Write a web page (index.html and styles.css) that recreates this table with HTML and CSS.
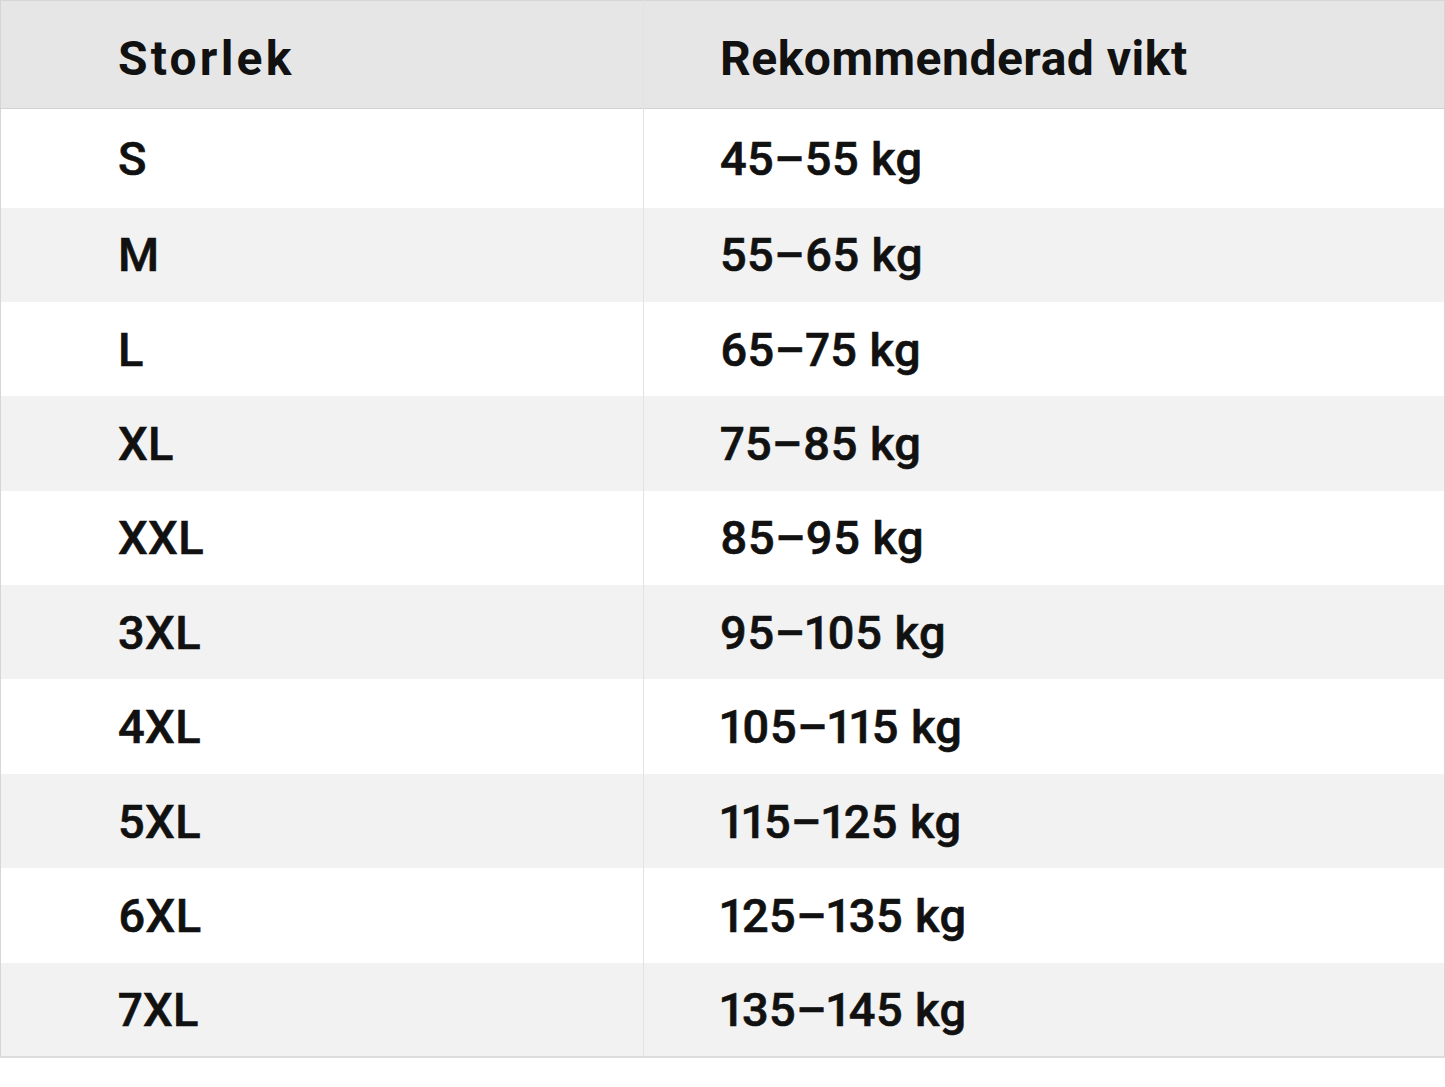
FILE: index.html
```html
<!DOCTYPE html>
<html lang="sv">
<head>
<meta charset="utf-8">
<title>Storlekstabell</title>
<link rel="stylesheet" href="styles.css">
</head>
<body>
<table class="size-table">
  <thead>
    <tr class="head-row">
      <th class="col-size">Storlek</th>
      <th class="col-weight">Rekommenderad vikt</th>
    </tr>
  </thead>
  <tbody>
    <tr class="first"><td class="col-size">S</td><td class="col-weight">45–55 kg</td></tr>
    <tr><td class="col-size">M</td><td class="col-weight">55–65 kg</td></tr>
    <tr><td class="col-size">L</td><td class="col-weight">65–75 kg</td></tr>
    <tr><td class="col-size">XL</td><td class="col-weight">75–85 kg</td></tr>
    <tr><td class="col-size">XXL</td><td class="col-weight">85–95 kg</td></tr>
    <tr><td class="col-size">3XL</td><td class="col-weight">95–105 kg</td></tr>
    <tr><td class="col-size">4XL</td><td class="col-weight">105–115 kg</td></tr>
    <tr><td class="col-size">5XL</td><td class="col-weight">115–125 kg</td></tr>
    <tr><td class="col-size">6XL</td><td class="col-weight">125–135 kg</td></tr>
    <tr><td class="col-size">7XL</td><td class="col-weight">135–145 kg</td></tr>
  </tbody>
</table>
</body>
</html>
```
FILE: styles.css
```css
html, body {
  margin: 0;
  padding: 0;
  background: #ffffff;
}
body {
  font-family: Roboto, "Liberation Sans", sans-serif;
  color: #111111;
}
.size-table {
  width: 1445px;
  border-collapse: collapse;
  border: 1px solid #d6d6d6;
  border-bottom: 2px solid #dcdcdc;
}
.size-table th,
.size-table td {
  text-align: left;
  padding: 0;
  vertical-align: middle;
}
.head-row {
  background: #e6e6e6;
  height: 108px;
  border-bottom: 1px solid #d2d2d2;
}
.head-row th {
  font-size: 48px;
  font-weight: 700;
  padding-top: 8px;
  letter-spacing: 0.5px;
}
.head-row th.col-size {
  letter-spacing: 3.2px;
}
tbody tr {
  height: 94.4px;
}
tbody tr.first {
  height: 99px;
}
tbody tr:nth-child(even) {
  background: #f2f2f2;
}
tbody td {
  font-size: 47px;
  font-weight: 500;
  padding-top: 6px;
  letter-spacing: 0.4px;
  font-variant-numeric: proportional-nums;
  -webkit-text-stroke: 0.6px #111111;
}
.col-size {
  width: 525px;
  padding-left: 117px !important;
  border-right: 1px solid #e2e2e2;
}
.col-weight {
  padding-left: 76px !important;
}
```
